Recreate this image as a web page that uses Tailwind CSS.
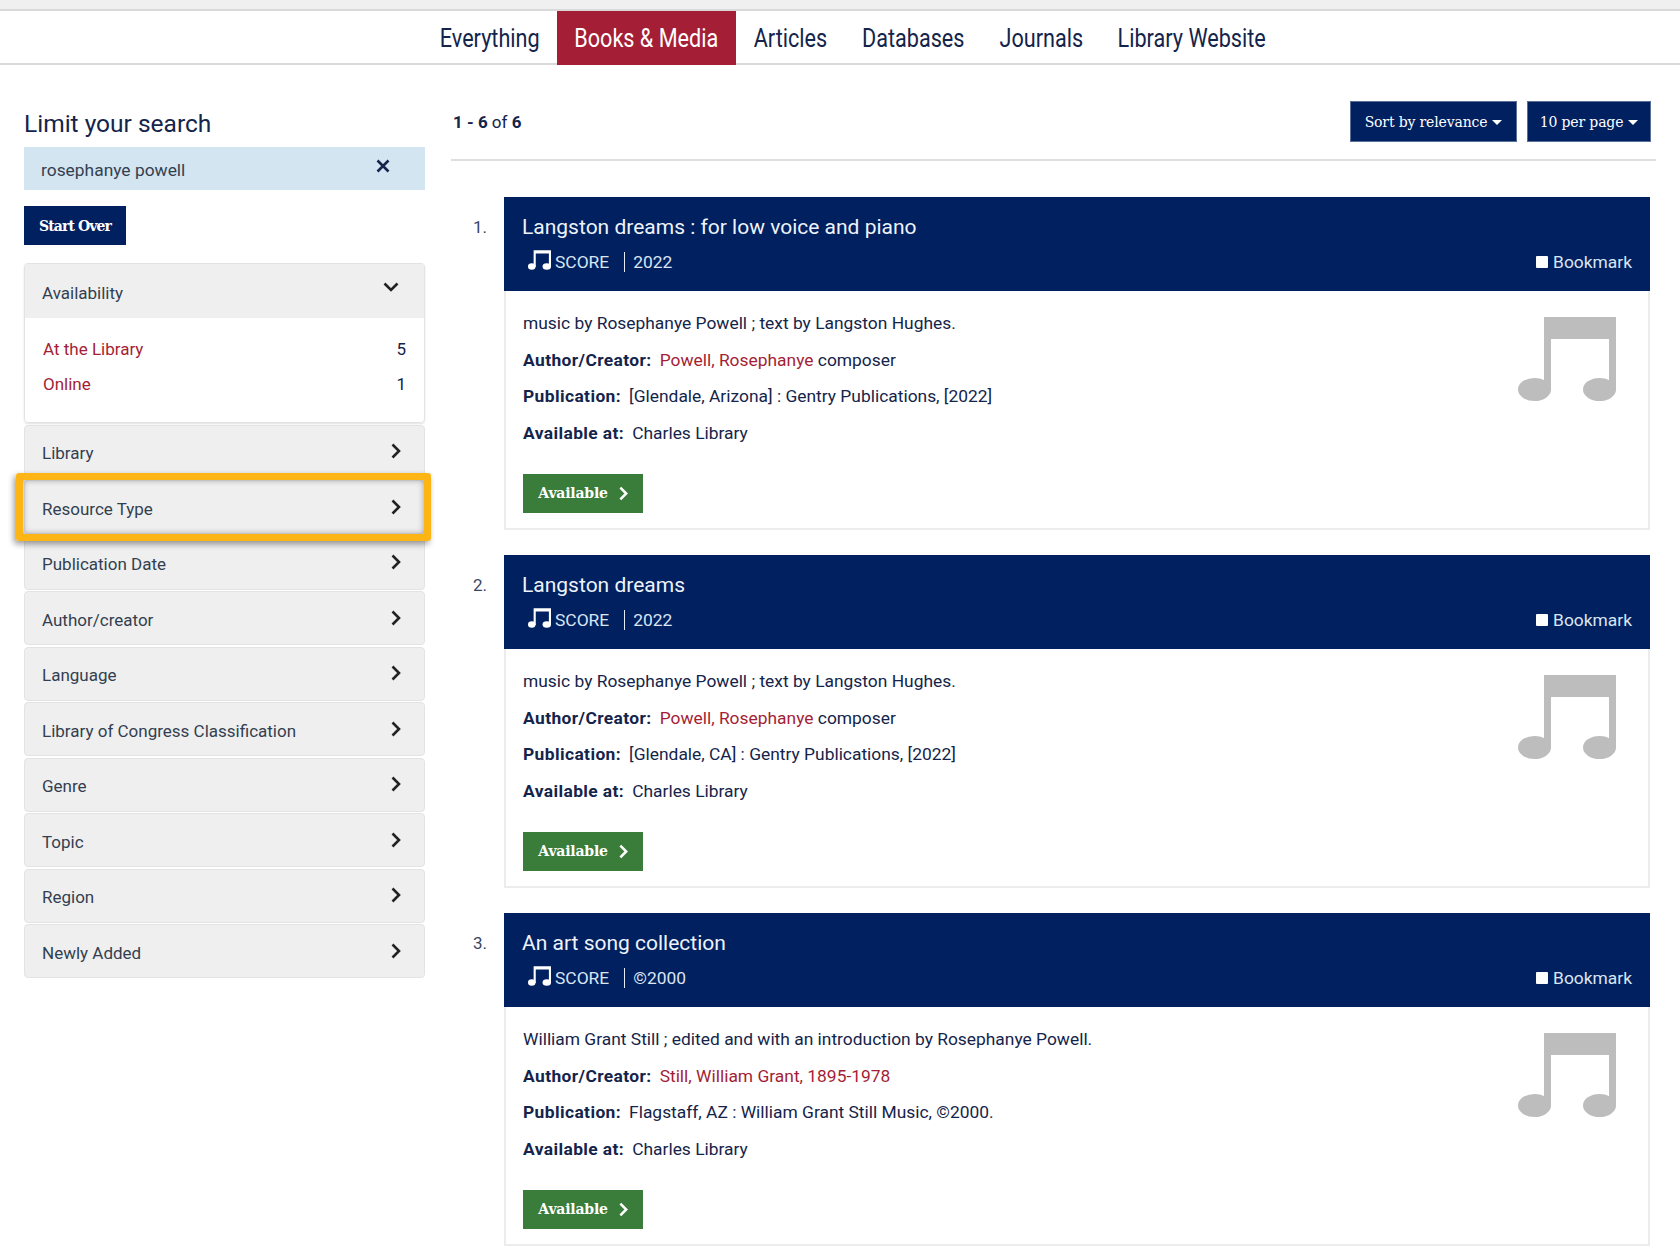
<!DOCTYPE html>
<html lang="en">
<head>
    <meta charset="UTF-8">
    <title>Library Search - Books &amp; Media</title>
    <script src="https://cdn.jsdelivr.net/npm/@tailwindcss/browser@4"></script>
</head>
<body class="bg-white text-[#14244a] font-['Roboto',sans-serif] text-[17.4px] h-[1258px] overflow-hidden">
    <!-- Top strip and tabs -->
    <div class="h-[9px] bg-[#f0f0f0]"></div>
    <nav class="h-[56px] border-y-2 border-[#d9d9d9] flex justify-center pl-[26px] text-[25px] whitespace-nowrap">
        <a class="w-[134px] h-[54px] flex justify-center items-center pt-[1px]"><span class="scale-x-[0.865]">Everything</span></a>
        <a class="w-[179px] h-[54px] flex justify-center items-center pt-[1px] bg-[#a41e35] text-white"><span class="scale-x-[0.865]">Books &amp; Media</span></a>
        <a class="w-[109px] h-[54px] flex justify-center items-center pt-[1px]"><span class="scale-x-[0.865]">Articles</span></a>
        <a class="w-[137px] h-[54px] flex justify-center items-center pt-[1px]"><span class="scale-x-[0.865]">Databases</span></a>
        <a class="w-[119px] h-[54px] flex justify-center items-center pt-[1px]"><span class="scale-x-[0.865]">Journals</span></a>
        <a class="w-[183px] h-[54px] flex justify-center items-center pt-[1px]"><span class="scale-x-[0.865]">Library Website</span></a>
    </nav>

    <div class="flex pl-[24px]">
        <!-- Sidebar -->
        <aside class="w-[401px] pt-[42px] shrink-0 text-[17px]">
            <h2 class="text-[24.5px] leading-[40px] h-[40px] mt-[-3px] mb-[3px]">Limit your search</h2>
            <div class="h-[43px] bg-[#d3e5f0] flex items-center pl-[17px] pr-[35px] justify-between">
                <span class="text-[#333f50] text-[17.4px] pt-[3px]">rosephanye powell</span>
                <svg class="w-[14px] h-[14px] mb-[5px]" viewBox="0 0 14 14" fill="none" stroke="#14244a" stroke-width="2.6"><path d="M1.5 1.5l11 11M12.5 1.5l-11 11"/></svg>
            </div>
            <button class="block mt-[16px] w-[102px] h-[39px] pt-[1px] bg-[#002060] text-white font-['DejaVu_Serif',serif] font-bold text-[14px] tracking-[-0.9px]">Start Over</button>

            <div class="mt-[18px] flex flex-col gap-[1.5px] text-[#333f50]">
                <div class="h-[160px] rounded-[4px] border border-[#e3e3e3] shadow-[0_1px_2px_rgba(0,0,0,0.12)] overflow-hidden">
                    <div class="h-[54px] bg-[#efefef] flex items-center justify-between pl-[17px] pr-[25px]">
                        <span class="pt-[6px]">Availability</span>
                        <svg class="w-[16px] h-[10px] mb-[8px]" viewBox="0 0 16 10" fill="none" stroke="#222" stroke-width="2.6"><path d="M1.5 1.5L8 8l6.5-6.5"/></svg>
                    </div>
                    <div class="pl-[18px] pr-[18px] pt-[19px] flex flex-col gap-[11px] text-[#a41e35]">
                        <div class="flex justify-between h-[24px] leading-[24px]"><span>At the Library</span><span class="text-[#14244a]">5</span></div>
                        <div class="flex justify-between h-[24px] leading-[24px]"><span>Online</span><span class="text-[#14244a]">1</span></div>
                    </div>
                </div>

                <div class="h-[54px] rounded-[4px] border border-[#e3e3e3] bg-[#efefef] flex items-center justify-between pl-[17px] pr-[23px]">
                    <span class="pt-[4px]">Library</span>
                    <svg class="w-[10px] h-[16px] mb-[2px]" viewBox="0 0 10 16" fill="none" stroke="#222" stroke-width="2.6"><path d="M1.5 1.5L8 8l-6.5 6.5"/></svg>
                </div>
                <div class="relative h-[54px] rounded-[4px] border border-[#e3e3e3] bg-[#efefef] flex items-center justify-between pl-[17px] pr-[23px]">
                    <span class="pt-[6px]">Resource Type</span>
                    <svg class="w-[10px] h-[16px] mb-[1px]" viewBox="0 0 10 16" fill="none" stroke="#222" stroke-width="2.6"><path d="M1.5 1.5L8 8l-6.5 6.5"/></svg>
                    <div class="absolute left-[-9px] right-[-7px] top-[-8px] bottom-[-8px] border-[7px] border-[#fdb515] rounded-[3px] shadow-[-2px_3px_6px_rgba(0,0,0,0.4),inset_0_0_6px_rgba(0,0,0,0.35)]"></div>
                </div>
                <div class="h-[54px] rounded-[4px] border border-[#e3e3e3] bg-[#efefef] flex items-center justify-between pl-[17px] pr-[23px]">
                    <span class="pt-[4px]">Publication Date</span>
                    <svg class="w-[10px] h-[16px] mb-[2px]" viewBox="0 0 10 16" fill="none" stroke="#222" stroke-width="2.6"><path d="M1.5 1.5L8 8l-6.5 6.5"/></svg>
                </div>
                <div class="h-[54px] rounded-[4px] border border-[#e3e3e3] bg-[#efefef] flex items-center justify-between pl-[17px] pr-[23px]">
                    <span class="pt-[6px]">Author/creator</span>
                    <svg class="w-[10px] h-[16px] mb-[1px]" viewBox="0 0 10 16" fill="none" stroke="#222" stroke-width="2.6"><path d="M1.5 1.5L8 8l-6.5 6.5"/></svg>
                </div>
                <div class="h-[54px] rounded-[4px] border border-[#e3e3e3] bg-[#efefef] flex items-center justify-between pl-[17px] pr-[23px]">
                    <span class="pt-[4px]">Language</span>
                    <svg class="w-[10px] h-[16px] mb-[1px]" viewBox="0 0 10 16" fill="none" stroke="#222" stroke-width="2.6"><path d="M1.5 1.5L8 8l-6.5 6.5"/></svg>
                </div>
                <div class="h-[54px] rounded-[4px] border border-[#e3e3e3] bg-[#efefef] flex items-center justify-between pl-[17px] pr-[23px]">
                    <span class="pt-[6px]">Library of Congress Classification</span>
                    <svg class="w-[10px] h-[16px] mb-[1px]" viewBox="0 0 10 16" fill="none" stroke="#222" stroke-width="2.6"><path d="M1.5 1.5L8 8l-6.5 6.5"/></svg>
                </div>
                <div class="h-[54px] rounded-[4px] border border-[#e3e3e3] bg-[#efefef] flex items-center justify-between pl-[17px] pr-[23px]">
                    <span class="pt-[4px]">Genre</span>
                    <svg class="w-[10px] h-[16px] mb-[1px]" viewBox="0 0 10 16" fill="none" stroke="#222" stroke-width="2.6"><path d="M1.5 1.5L8 8l-6.5 6.5"/></svg>
                </div>
                <div class="h-[54px] rounded-[4px] border border-[#e3e3e3] bg-[#efefef] flex items-center justify-between pl-[17px] pr-[23px]">
                    <span class="pt-[6px]">Topic</span>
                    <svg class="w-[10px] h-[16px] mb-[1px]" viewBox="0 0 10 16" fill="none" stroke="#222" stroke-width="2.6"><path d="M1.5 1.5L8 8l-6.5 6.5"/></svg>
                </div>
                <div class="h-[54px] rounded-[4px] border border-[#e3e3e3] bg-[#efefef] flex items-center justify-between pl-[17px] pr-[23px]">
                    <span class="pt-[4px]">Region</span>
                    <svg class="w-[10px] h-[16px] mb-[1px]" viewBox="0 0 10 16" fill="none" stroke="#222" stroke-width="2.6"><path d="M1.5 1.5L8 8l-6.5 6.5"/></svg>
                </div>
                <div class="h-[54px] rounded-[4px] border border-[#e3e3e3] bg-[#efefef] flex items-center justify-between pl-[17px] pr-[23px]">
                    <span class="pt-[6px]">Newly Added</span>
                    <svg class="w-[10px] h-[16px] mb-[1px]" viewBox="0 0 10 16" fill="none" stroke="#222" stroke-width="2.6"><path d="M1.5 1.5L8 8l-6.5 6.5"/></svg>
                </div>
            </div>
        </aside>

        <!-- Results -->
        <main class="ml-[26px] w-[1205px] shrink-0">
            <div class="h-[96px] pt-[36px] border-b-2 border-[#dedede] flex justify-between items-start pl-[2px] pr-[5px]">
                <div class="leading-[42px] text-[17px]"><b>1 - 6</b> of <b>6</b></div>
                <div class="flex gap-[10px] text-white font-['DejaVu_Serif',serif] text-[14px] tracking-[-0.15px]">
                    <button class="w-[167px] h-[41px] bg-[#002060] border border-[#5a6f98] flex items-center justify-center gap-[5px] pt-[1px]">Sort by relevance <span class="border-x-[5px] border-x-transparent border-t-[5px] border-t-white"></span></button>
                    <button class="w-[124px] h-[41px] bg-[#002060] border border-[#5a6f98] flex items-center justify-center gap-[5px] pt-[1px]">10 per page <span class="border-x-[5px] border-x-transparent border-t-[5px] border-t-white"></span></button>
                </div>
            </div>

            <div class="mt-[36px] flex flex-col gap-[25px]">
                <!-- Result 1 -->
                <article class="flex">
                    <div class="w-[53px] pl-[22px] pt-[18px] leading-[24px] text-[17px] text-[#3a4763]">1.</div>
                    <div class="w-[1146px] border-x-2 border-b-2 border-[#ececec] h-[333px]">
                        <header class="mx-[-2px] h-[94px] bg-[#002060] text-[#dbe5f3] px-[18px] pt-[16px]">
                            <h3 class="text-[21px] leading-[29px] text-[#eef3fa]">Langston dreams : for low voice and piano</h3>
                            <div class="flex items-center mt-[5px] h-[30px]">
                                <svg class="ml-[6px] mb-[4px] w-[23px] h-[20px]" viewBox="0 0 98 84" fill="#fff"><path d="M24 0H98V72H89V14H33V72H24Z"/><ellipse cx="16" cy="70" rx="16" ry="14"/><ellipse cx="80" cy="70" rx="18" ry="14"/></svg>
                                <span class="ml-[4px]">SCORE</span>
                                <span class="ml-[15px] h-[20px] border-l border-[#e4ecf7]"></span>
                                <span class="ml-[8px]">2022</span>
                                <span class="ml-auto flex items-center gap-[5px]"><span class="w-[12px] h-[12px] bg-white rounded-[1px]"></span>Bookmark</span>
                            </div>
                        </header>
                        <div class="relative px-[17px] pt-[14px]">
                            <p class="leading-[36.5px]">music by Rosephanye Powell ; text by Langston Hughes.</p>
                            <p class="leading-[36.5px]"><b class="font-bold mr-[8px] tracking-[0.4px]">Author/Creator:</b><span class="text-[#a41e35]">Powell, Rosephanye</span> composer</p>
                            <p class="leading-[36.5px]"><b class="font-bold mr-[8px] tracking-[0.4px]">Publication:</b>[Glendale, Arizona] : Gentry Publications, [2022]</p>
                            <p class="leading-[36.5px]"><b class="font-bold mr-[8px] tracking-[0.4px]">Available at:</b>Charles Library</p>
                            <button class="mt-[23px] w-[120px] h-[39px] bg-[#3a7d3a] text-white font-['DejaVu_Serif',serif] font-bold text-[14px] tracking-[-0.2px] flex items-center justify-center gap-[11px]">Available
                                <svg class="w-[9px] h-[15px]" viewBox="0 0 10 16" fill="none" stroke="#fff" stroke-width="2.8"><path d="M1.5 1.5L8 8l-6.5 6.5"/></svg>
                            </button>
                            <svg class="absolute top-[26px] right-[32px] w-[98px] h-[84px]" viewBox="0 0 98 84" fill="#bdbdbd"><path d="M26 0H98V73H91V22H33V73H26Z"/><ellipse cx="16.5" cy="72.5" rx="16.5" ry="11.5"/><ellipse cx="81.5" cy="72.5" rx="16.5" ry="11.5"/></svg>
                        </div>
                    </div>
                </article>

                <!-- Result 2 -->
                <article class="flex">
                    <div class="w-[53px] pl-[22px] pt-[18px] leading-[24px] text-[17px] text-[#3a4763]">2.</div>
                    <div class="w-[1146px] border-x-2 border-b-2 border-[#ececec] h-[333px]">
                        <header class="mx-[-2px] h-[94px] bg-[#002060] text-[#dbe5f3] px-[18px] pt-[16px]">
                            <h3 class="text-[21px] leading-[29px] text-[#eef3fa]">Langston dreams</h3>
                            <div class="flex items-center mt-[5px] h-[30px]">
                                <svg class="ml-[6px] mb-[4px] w-[23px] h-[20px]" viewBox="0 0 98 84" fill="#fff"><path d="M24 0H98V72H89V14H33V72H24Z"/><ellipse cx="16" cy="70" rx="16" ry="14"/><ellipse cx="80" cy="70" rx="18" ry="14"/></svg>
                                <span class="ml-[4px]">SCORE</span>
                                <span class="ml-[15px] h-[20px] border-l border-[#e4ecf7]"></span>
                                <span class="ml-[8px]">2022</span>
                                <span class="ml-auto flex items-center gap-[5px]"><span class="w-[12px] h-[12px] bg-white rounded-[1px]"></span>Bookmark</span>
                            </div>
                        </header>
                        <div class="relative px-[17px] pt-[14px]">
                            <p class="leading-[36.5px]">music by Rosephanye Powell ; text by Langston Hughes.</p>
                            <p class="leading-[36.5px]"><b class="font-bold mr-[8px] tracking-[0.4px]">Author/Creator:</b><span class="text-[#a41e35]">Powell, Rosephanye</span> composer</p>
                            <p class="leading-[36.5px]"><b class="font-bold mr-[8px] tracking-[0.4px]">Publication:</b>[Glendale, CA] : Gentry Publications, [2022]</p>
                            <p class="leading-[36.5px]"><b class="font-bold mr-[8px] tracking-[0.4px]">Available at:</b>Charles Library</p>
                            <button class="mt-[23px] w-[120px] h-[39px] bg-[#3a7d3a] text-white font-['DejaVu_Serif',serif] font-bold text-[14px] tracking-[-0.2px] flex items-center justify-center gap-[11px]">Available
                                <svg class="w-[9px] h-[15px]" viewBox="0 0 10 16" fill="none" stroke="#fff" stroke-width="2.8"><path d="M1.5 1.5L8 8l-6.5 6.5"/></svg>
                            </button>
                            <svg class="absolute top-[26px] right-[32px] w-[98px] h-[84px]" viewBox="0 0 98 84" fill="#bdbdbd"><path d="M26 0H98V73H91V22H33V73H26Z"/><ellipse cx="16.5" cy="72.5" rx="16.5" ry="11.5"/><ellipse cx="81.5" cy="72.5" rx="16.5" ry="11.5"/></svg>
                        </div>
                    </div>
                </article>

                <!-- Result 3 -->
                <article class="flex">
                    <div class="w-[53px] pl-[22px] pt-[18px] leading-[24px] text-[17px] text-[#3a4763]">3.</div>
                    <div class="w-[1146px] border-x-2 border-b-2 border-[#ececec] h-[333px]">
                        <header class="mx-[-2px] h-[94px] bg-[#002060] text-[#dbe5f3] px-[18px] pt-[16px]">
                            <h3 class="text-[21px] leading-[29px] text-[#eef3fa]">An art song collection</h3>
                            <div class="flex items-center mt-[5px] h-[30px]">
                                <svg class="ml-[6px] mb-[4px] w-[23px] h-[20px]" viewBox="0 0 98 84" fill="#fff"><path d="M24 0H98V72H89V14H33V72H24Z"/><ellipse cx="16" cy="70" rx="16" ry="14"/><ellipse cx="80" cy="70" rx="18" ry="14"/></svg>
                                <span class="ml-[4px]">SCORE</span>
                                <span class="ml-[15px] h-[20px] border-l border-[#e4ecf7]"></span>
                                <span class="ml-[8px]">©2000</span>
                                <span class="ml-auto flex items-center gap-[5px]"><span class="w-[12px] h-[12px] bg-white rounded-[1px]"></span>Bookmark</span>
                            </div>
                        </header>
                        <div class="relative px-[17px] pt-[14px]">
                            <p class="leading-[36.5px]">William Grant Still ; edited and with an introduction by Rosephanye Powell.</p>
                            <p class="leading-[36.5px]"><b class="font-bold mr-[8px] tracking-[0.4px]">Author/Creator:</b><span class="text-[#a41e35]">Still, William Grant, 1895-1978</span></p>
                            <p class="leading-[36.5px]"><b class="font-bold mr-[8px] tracking-[0.4px]">Publication:</b>Flagstaff, AZ : William Grant Still Music, ©2000.</p>
                            <p class="leading-[36.5px]"><b class="font-bold mr-[8px] tracking-[0.4px]">Available at:</b>Charles Library</p>
                            <button class="mt-[23px] w-[120px] h-[39px] bg-[#3a7d3a] text-white font-['DejaVu_Serif',serif] font-bold text-[14px] tracking-[-0.2px] flex items-center justify-center gap-[11px]">Available
                                <svg class="w-[9px] h-[15px]" viewBox="0 0 10 16" fill="none" stroke="#fff" stroke-width="2.8"><path d="M1.5 1.5L8 8l-6.5 6.5"/></svg>
                            </button>
                            <svg class="absolute top-[26px] right-[32px] w-[98px] h-[84px]" viewBox="0 0 98 84" fill="#bdbdbd"><path d="M26 0H98V73H91V22H33V73H26Z"/><ellipse cx="16.5" cy="72.5" rx="16.5" ry="11.5"/><ellipse cx="81.5" cy="72.5" rx="16.5" ry="11.5"/></svg>
                        </div>
                    </div>
                </article>
            </div>
        </main>
    </div>
</body>
</html>
